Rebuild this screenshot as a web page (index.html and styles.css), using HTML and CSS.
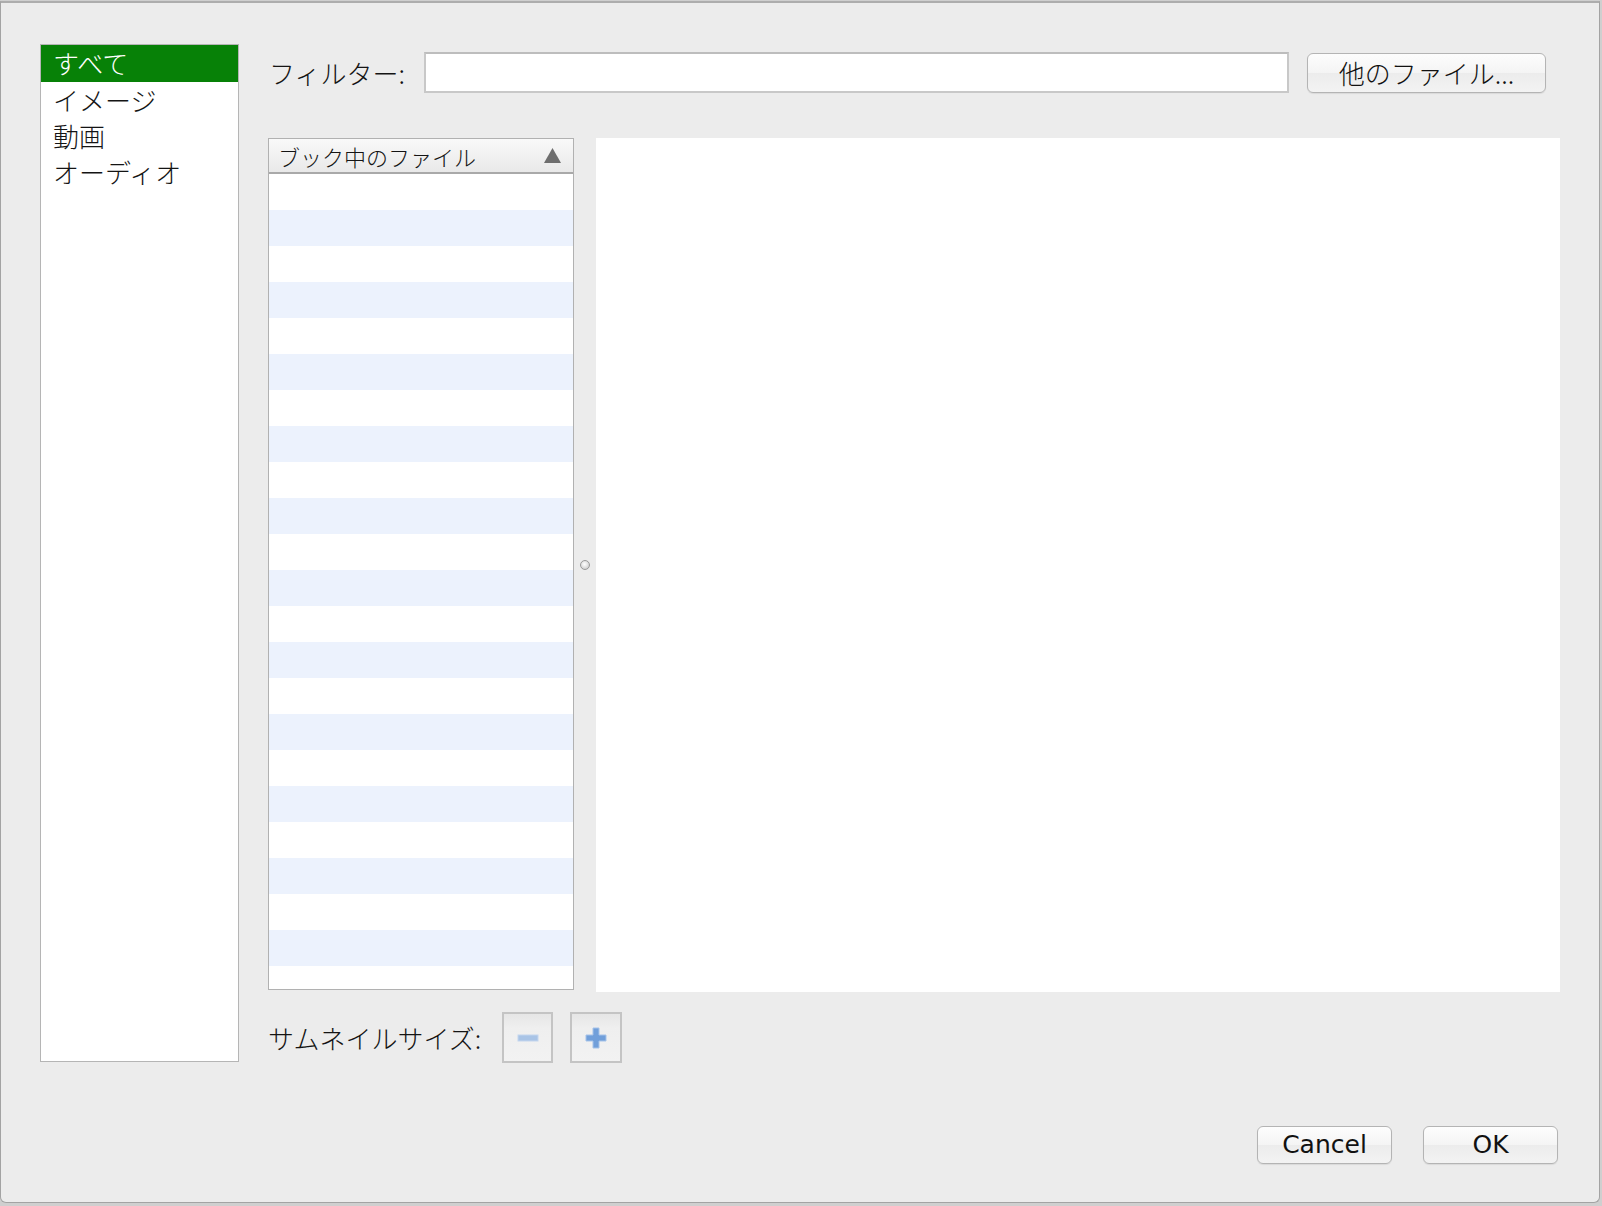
FILE: index.html
```html
<!DOCTYPE html>
<html lang="ja">
<head>
    <meta charset="UTF-8">
    <meta name="viewport" content="width=device-width, initial-scale=1.0">
    <title>ファイルの選択</title>
    <link rel="stylesheet" href="styles.css">
</head>
<body>

    <div class="dialog">
        <div class="main">
            <div class="sidebar">
                <div class="sidebar-item selected">すべて</div>
                <div class="sidebar-item">イメージ</div>
                <div class="sidebar-item">動画</div>
                <div class="sidebar-item">オーディオ</div>
            </div>

            <div class="content">
                <div class="filter-row">
                    <label class="filter-label" for="filter">フィルター:</label>
                    <input class="filter-input" type="text" id="filter">
                    <button class="push-button other-button" type="button">他のファイル...</button>
                </div>

                <div class="browser">
                    <div class="file-table">
                        <div class="table-header">
                            <span>ブック中のファイル</span>
                            <svg class="sort-arrow" width="17" height="15" viewBox="0 0 17 15">
                                <polygon points="8.5,0 17,15 0,15" fill="#6e6e6e"/>
                            </svg>
                        </div>
                        <div class="rows">
                            <div class="row"></div><div class="row"></div><div class="row"></div>
                            <div class="row"></div><div class="row"></div><div class="row"></div>
                            <div class="row"></div><div class="row"></div><div class="row"></div>
                            <div class="row"></div><div class="row"></div><div class="row"></div>
                            <div class="row"></div><div class="row"></div><div class="row"></div>
                            <div class="row"></div><div class="row"></div><div class="row"></div>
                            <div class="row"></div><div class="row"></div><div class="row"></div>
                            <div class="row"></div><div class="row"></div>
                        </div>
                    </div>
                    <div class="splitter"><span class="grip"></span></div>
                    <div class="preview"></div>
                </div>

                <div class="thumb-row">
                    <span class="thumb-label">サムネイルサイズ:</span>
                    <button class="zoom-button" type="button" title="小さく">
                        <svg width="22" height="8" viewBox="0 0 22 8">
                            <rect x="1" y="1" width="20" height="6" fill="#a9c4e6" stroke="#c4d6ee" stroke-width="1"/>
                        </svg>
                    </button>
                    <button class="zoom-button plus" type="button" title="大きく">
                        <svg width="24" height="24" viewBox="0 0 24 24">
                            <path d="M9 2h6v7h7v6h-7v7H9v-7H2V9h7z" fill="#719fda" stroke="#a6c3e9" stroke-width="1"/>
                        </svg>
                    </button>
                </div>
            </div>
        </div>

        <div class="footer">
            <button class="push-button dialog-button" type="button">Cancel</button>
            <button class="push-button dialog-button" type="button">OK</button>
        </div>
    </div>

</body>
</html>
```

FILE: styles.css
```css
* {
    box-sizing: border-box;
}
body {
    margin: 0;
    background-color: #cfcfcf;
    font-family: "Noto Sans CJK JP", "Noto Sans", sans-serif;
    font-weight: 300;
    color: #141414;
}
.dialog {
    width: 1600px;
    height: 1202px;
    margin-top: 1px;
    background: #ececec;
    border: 1px solid #a3a3a3;
    border-top: 2px solid #adadad;
    border-radius: 0 0 6px 6px;
    padding: 41px 39px 0 39px;
    display: flex;
    flex-direction: column;
}
.main {
    display: flex;
    align-items: flex-start;
    height: 1018px;
}
.sidebar {
    width: 199px;
    height: 1018px;
    flex: none;
    background: #fff;
    border: 1px solid #b5b5b5;
}
.sidebar-item {
    height: 36px;
    line-height: 36px;
    padding-left: 12px;
    font-size: 26px;
}
.sidebar-item.selected {
    height: 37px;
    background: #078107;
    color: #fff;
}
.content {
    margin-left: 29px;
    flex: 1;
    display: flex;
    flex-direction: column;
}
.filter-row {
    display: flex;
    align-items: center;
    margin-top: 8px;
    height: 41px;
    padding-right: 14px;
}
.filter-label {
    width: 156px;
    flex: none;
    padding-left: 1px;
    font-size: 26px;
    line-height: 30px;
}
.filter-input {
    flex: 1;
    height: 41px;
    margin: 0;
    border: 2px solid #c8c8c8;
    border-top-color: #bdbdbd;
    background: #fff;
}
.push-button {
    border: 1px solid #b4b4b4;
    border-radius: 6px;
    background: linear-gradient(#fdfdfd, #f4f4f4 50%, #ececec 51%, #f3f3f3);
    box-shadow: 0 1px 1px rgba(0, 0, 0, 0.08);
    color: #111;
    padding: 0;
    cursor: pointer;
}
.other-button {
    margin-left: 18px;
    width: 239px;
    height: 40px;
    flex: none;
    font-family: inherit;
    font-weight: 300;
    font-size: 26px;
    line-height: 30px;
}
.browser {
    margin-top: 45px;
    height: 854px;
    display: flex;
}
.file-table {
    width: 306px;
    height: 852px;
    flex: none;
    border: 1px solid #b1b1b1;
    background: #fff;
    overflow: hidden;
    display: flex;
    flex-direction: column;
}
.table-header {
    height: 35px;
    flex: none;
    border-bottom: 2px solid #a9a9a9;
    background: linear-gradient(#f9f9f9, #e9e9e9);
    display: flex;
    align-items: center;
    justify-content: space-between;
    padding: 0 12px 0 9px;
    font-size: 22px;
    line-height: 26px;
}
.rows {
    flex: 1;
    overflow: hidden;
}
.row {
    height: 36px;
}
.row:nth-child(even) {
    background: #ecf2fd;
}
.splitter {
    width: 22px;
    flex: none;
    display: flex;
    align-items: center;
    justify-content: center;
}
.grip {
    width: 10px;
    height: 10px;
    border-radius: 50%;
    border: 1px solid #9a9a9a;
    background: radial-gradient(circle at 45% 40%, #ffffff, #d4d4d4 70%, #b4b4b4);
}
.preview {
    flex: 1;
    background: #fff;
}
.thumb-row {
    margin-top: 20px;
    display: flex;
    align-items: center;
    height: 51px;
}
.thumb-label {
    width: 234px;
    flex: none;
    font-size: 26px;
    line-height: 30px;
}
.zoom-button {
    width: 51px;
    height: 51px;
    padding: 0;
    border: 2px solid #c4c4c4;
    background: linear-gradient(#e6e6e6, #efefef 30%, #f2f2f2);
    display: flex;
    align-items: center;
    justify-content: center;
}
.zoom-button.plus {
    margin-left: 17px;
    width: 52px;
}
.footer {
    display: flex;
    justify-content: flex-end;
    gap: 31px;
    margin-top: 64px;
    padding-right: 2px;
}
.dialog-button {
    width: 135px;
    height: 38px;
    font-family: "DejaVu Sans", "Liberation Sans", sans-serif;
    font-weight: 400;
    font-size: 25px;
    line-height: 30px;
}
```
